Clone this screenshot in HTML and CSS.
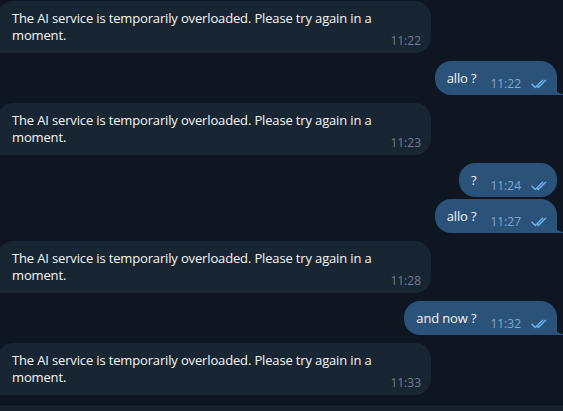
FILE: index.html
```html
<!DOCTYPE html>
<html lang="en">
<head>
<meta charset="utf-8">
<title>Chat</title>
<link rel="stylesheet" href="styles.css">
</head>
<body>
<div class="chat">
  <div class="messages">
    <div class="bubble in">
      <p class="text">The AI service is temporarily overloaded. Please try again in a moment.</p>
      <span class="meta"><span class="time">11:22</span></span>
    </div>
    <div class="bubble out tail">
      <p class="text">allo ?</p>
      <span class="meta"><span class="time">11:22</span><svg class="check" viewBox="0 0 18 10" width="18" height="10"><path d="M1 5.2 L4.3 8.6 L11.6 1.2 M6 7.3 L7.3 8.6 L14.6 1.2"/></svg></span>
    </div>
    <div class="bubble in">
      <p class="text">The AI service is temporarily overloaded. Please try again in a moment.</p>
      <span class="meta"><span class="time">11:23</span></span>
    </div>
    <div class="bubble out">
      <p class="text">?</p>
      <span class="meta"><span class="time">11:24</span><svg class="check" viewBox="0 0 18 10" width="18" height="10"><path d="M1 5.2 L4.3 8.6 L11.6 1.2 M6 7.3 L7.3 8.6 L14.6 1.2"/></svg></span>
    </div>
    <div class="bubble out tail grouped">
      <p class="text">allo ?</p>
      <span class="meta"><span class="time">11:27</span><svg class="check" viewBox="0 0 18 10" width="18" height="10"><path d="M1 5.2 L4.3 8.6 L11.6 1.2 M6 7.3 L7.3 8.6 L14.6 1.2"/></svg></span>
    </div>
    <div class="bubble in">
      <p class="text">The AI service is temporarily overloaded. Please try again in a moment.</p>
      <span class="meta"><span class="time">11:28</span></span>
    </div>
    <div class="bubble out tail">
      <p class="text">and now ?</p>
      <span class="meta"><span class="time">11:32</span><svg class="check" viewBox="0 0 18 10" width="18" height="10"><path d="M1 5.2 L4.3 8.6 L11.6 1.2 M6 7.3 L7.3 8.6 L14.6 1.2"/></svg></span>
    </div>
    <div class="bubble in">
      <p class="text">The AI service is temporarily overloaded. Please try again in a moment.</p>
      <span class="meta"><span class="time">11:33</span></span>
    </div>
  </div>
  <div class="composer"></div>
</div>
</body>
</html>
```

FILE: styles.css
```css
html, body {
  margin: 0;
  padding: 0;
}

body {
  background: #0e1621;
  font-family: "Open Sans", "Noto Sans", sans-serif;
  color: #f5f5f5;
  overflow: hidden;
}

.chat {
  height: 411px;
  display: flex;
  flex-direction: column;
}

.messages {
  flex: 1;
  display: flex;
  flex-direction: column;
  gap: 8px;
  padding: 1px 6px 0 0;
}

.composer {
  height: 6px;
  border-top: 1px solid #0a1018;
  background: #17212b;
}

.bubble {
  position: relative;
  box-sizing: border-box;
  border-radius: 16px;
}

.text {
  margin: 0;
  font-size: 13px;
  line-height: 17px;
  letter-spacing: -0.15px;
}

.time {
  font-size: 12px;
  line-height: 17px;
}

/* incoming */
.in {
  align-self: flex-start;
  width: 434px;
  margin-left: -3px;
  padding: 9px 10px 3px 15px;
  background: #182533;
  border-bottom-left-radius: 0;
  display: grid;
}

.in > * {
  grid-area: 1 / 1;
}

.in .text {
  margin-bottom: 6px;
}

.in .meta {
  align-self: end;
  justify-self: end;
}

.in .time {
  color: #6d7f8f;
}

.in::after {
  content: "";
  position: absolute;
  left: -6px;
  bottom: 0;
  width: 6px;
  height: 10px;
  background: radial-gradient(circle at 0 0, transparent 8.5px, #182533 9px);
}

/* outgoing */
.out {
  align-self: flex-end;
  display: flex;
  align-items: flex-start;
  padding: 9px 8px 3px 12px;
  background: #2b5278;
}

.out.grouped {
  margin-top: -6px;
}

.out .meta {
  display: flex;
  align-items: center;
  gap: 10px;
  margin-top: 5px;
  margin-left: 14px;
}

.out .time {
  color: #7da8d3;
}

.check {
  display: block;
  fill: none;
  stroke: #6ab3f3;
  stroke-width: 1.4;
  stroke-linecap: round;
  stroke-linejoin: round;
}

.out.tail {
  border-bottom-right-radius: 0;
}

.out.tail::after {
  content: "";
  position: absolute;
  right: -6px;
  bottom: 0;
  width: 6px;
  height: 10px;
  background: radial-gradient(circle at 100% 0, transparent 8.5px, #2b5278 9px);
}
```
